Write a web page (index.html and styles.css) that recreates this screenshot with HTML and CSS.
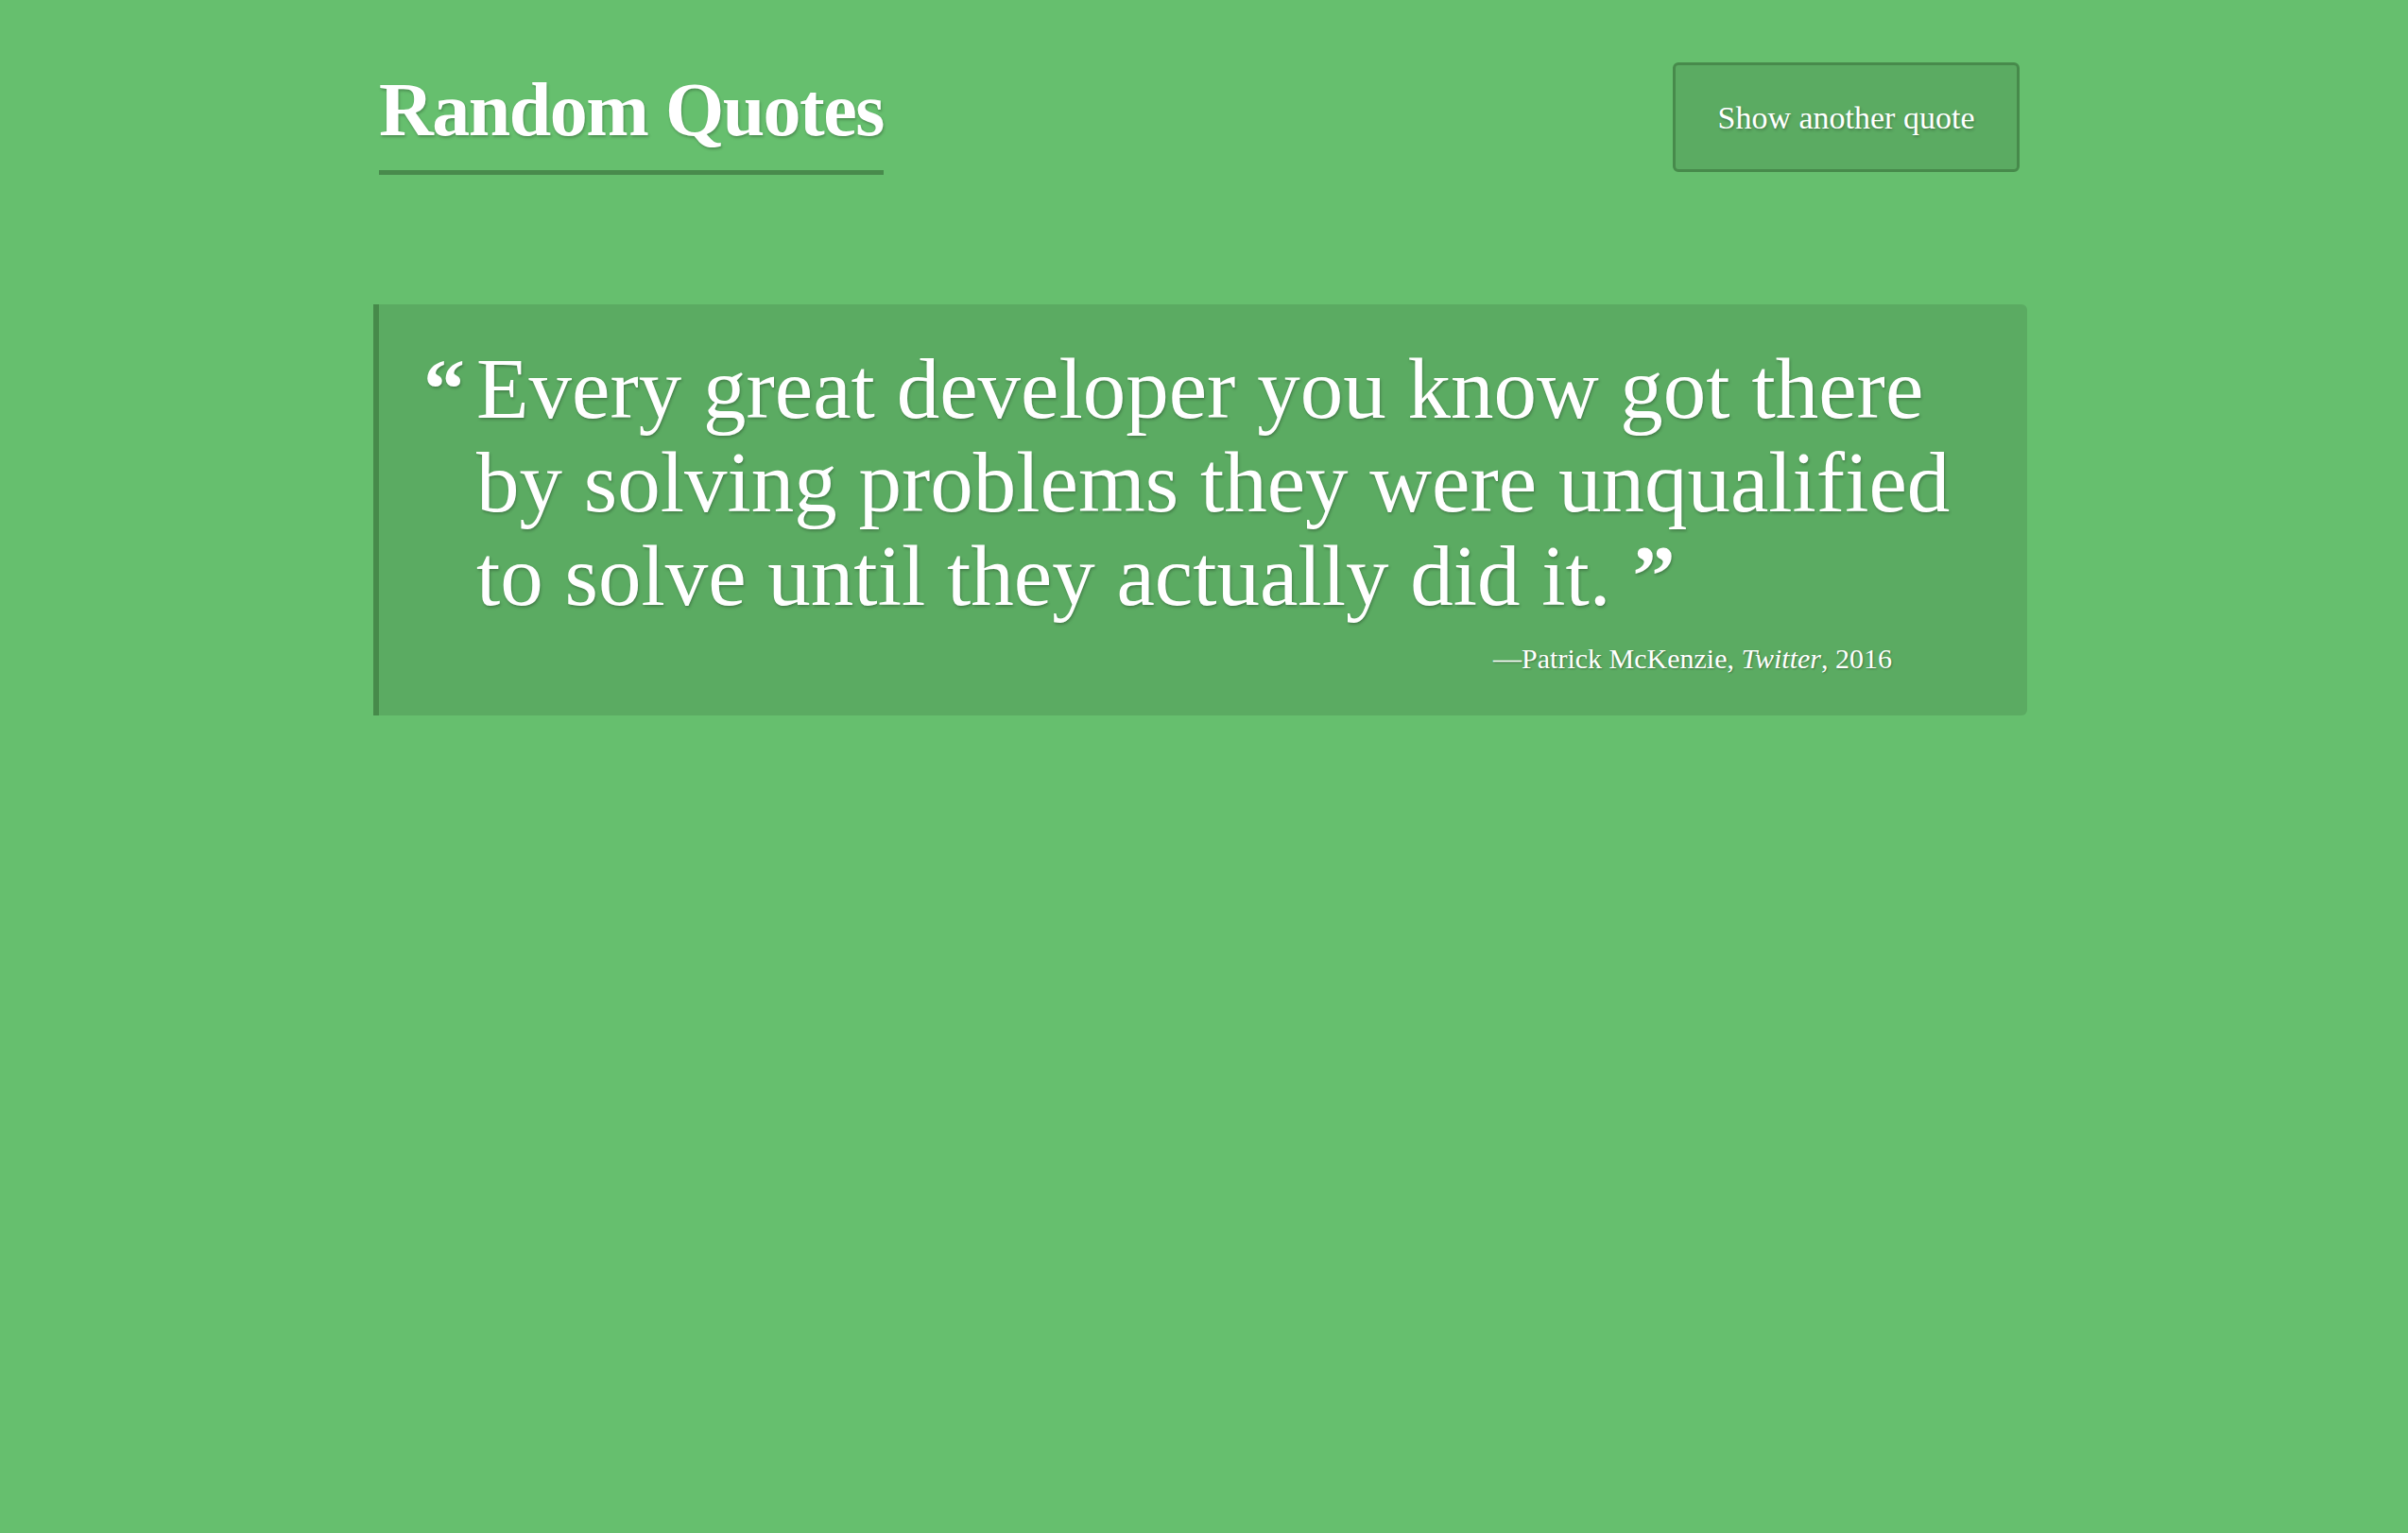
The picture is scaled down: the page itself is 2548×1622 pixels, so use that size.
FILE: index.html
```html
<!DOCTYPE html>
<html lang="en">
<head>
<meta charset="utf-8">
<title>Random Quotes</title>
<link rel="stylesheet" href="styles.css">
</head>
<body>
<div class="page">
  <header class="topbar">
    <h1 class="title">Random Quotes</h1>
    <button class="btn" type="button">Show another quote</button>
  </header>
  <blockquote class="quote">
    <div class="quote-body">
      <span class="mark-open">“</span>
      <p class="quote-text">Every great developer you know got there by solving problems they were unqualified to solve until they actually did it. <b class="mark-close">”</b></p>
    </div>
    <footer class="cite">—Patrick McKenzie, <cite>Twitter</cite>, 2016</footer>
  </blockquote>
</div>
</body>
</html>
```
FILE: styles.css
```css
html, body {
  margin: 0;
  padding: 0;
}
body {
  background: #66bf6e;
  color: #ffffff;
  font-family: "Liberation Serif", "Times New Roman", serif;
  min-height: 100vh;
}
.page {
  width: 1750px;
  padding-left: 395px;
  padding-top: 66px;
}
.topbar {
  display: flex;
  justify-content: space-between;
  align-items: flex-start;
  padding: 0 8px 0 6px;
}
.title {
  margin: 10px 0 0;
  font-size: 80px;
  line-height: 80px;
  font-weight: 700;
  letter-spacing: -1.5px;
  padding-bottom: 24px;
  border-bottom: 5px solid #488a4c;
  text-shadow: 1px 2px 3px rgba(0, 0, 0, 0.25);
}
.btn {
  width: 367px;
  height: 116px;
  box-sizing: border-box;
  background: #5bab62;
  border: 3px solid #478a4b;
  border-radius: 6px;
  color: #ffffff;
  font-family: inherit;
  font-size: 34px;
  line-height: 40px;
  padding: 2px 0 0;
  text-shadow: 1px 2px 3px rgba(0, 0, 0, 0.25);
  cursor: pointer;
}
.quote {
  margin: 137px 0 0;
  background: #5bab62;
  border-left: 6px solid #468a4a;
  border-radius: 0 6px 6px 0;
  padding: 40px 41px 42px 47px;
}
.quote-body {
  display: flex;
}
.mark-open {
  flex: none;
  width: 56px;
  font-size: 88px;
  line-height: 99px;
  font-weight: 700;
  text-shadow: 1px 2px 3px rgba(0, 0, 0, 0.25);
}
.quote-text {
  flex: 1;
  margin: 0;
  font-size: 91px;
  line-height: 99px;
  text-shadow: 1px 2px 3px rgba(0, 0, 0, 0.25);
}
.mark-close {
  font-weight: 700;
}
.cite {
  margin-top: 20px;
  text-align: right;
  font-size: 30px;
  line-height: 36px;
  padding-right: 102px;
  text-shadow: 1px 1px 2px rgba(0, 0, 0, 0.3);
}
.cite cite {
  font-style: italic;
}
```
